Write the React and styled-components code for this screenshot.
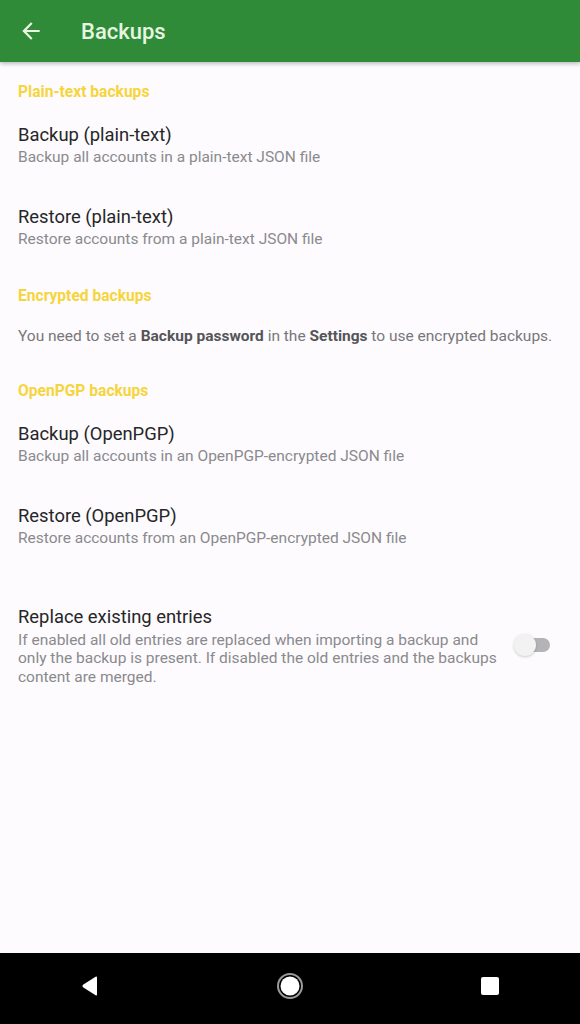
import React from "react";
import styled, { createGlobalStyle } from "styled-components";

const GlobalStyle = createGlobalStyle`
  html, body {
    margin: 0;
    padding: 0;
    background: #fdfbfd;
  }
  body {
    font-family: Roboto, "Noto Sans", sans-serif;
  }
`;

const Screen = styled.div`
  width: 580px;
  height: 1024px;
  display: flex;
  flex-direction: column;
  background: #fdfbfd;
  overflow: hidden;
`;

const AppBar = styled.header`
  height: 62px;
  flex: 0 0 62px;
  background: #2f8b38;
  display: flex;
  align-items: center;
  padding-left: 18px;
  box-shadow: 0 2px 4px rgba(0, 0, 0, 0.25);
  position: relative;
  z-index: 1;
`;

const BackButton = styled.button`
  border: 0;
  background: none;
  padding: 0;
  width: 26px;
  height: 26px;
  display: flex;
  color: #eaf6e4;
`;

const Title = styled.h1`
  margin: 0 0 0 37px;
  font-size: 22px;
  font-weight: 500;
  color: #e8f5e2;
`;

const Content = styled.main`
  flex: 1;
  display: flex;
  flex-direction: column;
`;

const Category = styled.div`
  padding: 20px 18px 0;
  line-height: 20px;
  font-size: 15.6px;
  font-weight: 700;
  color: #f6d53c;
`;

const Info = styled.p`
  margin: 0;
  padding: 20px 18px 15px;
  font-size: 15.5px;
  line-height: 20px;
  color: #77777b;
  b {
    color: #555559;
    font-weight: 700;
  }
`;

const Item = styled.div`
  padding: 21px 18px 17px;
  display: flex;
  align-items: center;
  gap: 12px;
  margin-top: ${({ $gap }) => $gap || 0}px;
`;

const ItemText = styled.div`
  flex: 1;
  min-width: 0;
`;

const ItemTitle = styled.div`
  font-size: 18.4px;
  line-height: 24px;
  color: #262628;
`;

const ItemSummary = styled.div`
  margin-top: ${({ $mt }) => $mt || 0}px;
  font-size: 15.5px;
  line-height: ${({ $lh }) => $lh || 20}px;
  color: #8a8a8e;
  max-width: ${({ $max }) => ($max ? $max + "px" : "none")};
`;

const Switch = styled.div`
  position: relative;
  width: 36px;
  height: 22px;
  flex: 0 0 36px;
  margin-right: 12px;
`;

const Track = styled.div`
  position: absolute;
  left: 6px;
  right: 0;
  top: 4px;
  height: 14px;
  border-radius: 7px;
  background: #b4b4b6;
`;

const Thumb = styled.div`
  position: absolute;
  left: 0;
  top: 0;
  width: 22px;
  height: 22px;
  border-radius: 50%;
  background: #f2f2f2;
  box-shadow: 0 1px 3px rgba(0, 0, 0, 0.2);
`;

const NavBar = styled.nav`
  flex: 0 0 71px;
  height: 71px;
  background: #000;
  display: flex;
  align-items: center;
  justify-content: space-between;
  padding: 0 70px 6px;
  box-sizing: border-box;
`;

const NavIcon = styled.div`
  display: flex;
  align-items: center;
  justify-content: center;
  width: 40px;
  height: 40px;
`;

const plain = [
  { title: "Backup (plain-text)", summary: "Backup all accounts in a plain-text JSON file" },
  { title: "Restore (plain-text)", summary: "Restore accounts from a plain-text JSON file" },
];

const pgp = [
  { title: "Backup (OpenPGP)", summary: "Backup all accounts in an OpenPGP-encrypted JSON file" },
  { title: "Restore (OpenPGP)", summary: "Restore accounts from an OpenPGP-encrypted JSON file" },
];

function Pref({ title, summary }) {
  return (
    <Item>
      <ItemText>
        <ItemTitle>{title}</ItemTitle>
        <ItemSummary>{summary}</ItemSummary>
      </ItemText>
    </Item>
  );
}

export default function App() {
  return (
    <Screen>
      <GlobalStyle />
      <AppBar>
        <BackButton aria-label="Back">
          <svg width="26" height="26" viewBox="0 0 24 24" fill="currentColor">
            <path d="M20 11H7.83l5.59-5.59L12 4l-8 8 8 8 1.41-1.41L7.83 13H20v-2z" />
          </svg>
        </BackButton>
        <Title>Backups</Title>
      </AppBar>
      <Content>
        <Category>Plain-text backups</Category>
        {plain.map((p) => (
          <Pref key={p.title} {...p} />
        ))}
        <Category>Encrypted backups</Category>
        <Info>
          You need to set a <b>Backup password</b> in the <b>Settings</b> to use encrypted backups.
        </Info>
        <Category>OpenPGP backups</Category>
        {pgp.map((p) => (
          <Pref key={p.title} {...p} />
        ))}
        <Item $gap={19}>
          <ItemText>
            <ItemTitle>Replace existing entries</ItemTitle>
            <ItemSummary $mt={2} $lh={18.3} $max={490}>
              If enabled all old entries are replaced when importing a backup and only the backup is
              present. If disabled the old entries and the backups content are merged.
            </ItemSummary>
          </ItemText>
          <Switch>
            <Track />
            <Thumb />
          </Switch>
        </Item>
      </Content>
      <NavBar>
        <NavIcon>
          <svg width="20" height="22" viewBox="0 0 20 22">
            <path d="M17 2.5 L17 19.5 Q17 21 15.6 20.2 L3 12.2 Q1.8 11 3 9.8 L15.6 1.8 Q17 1 17 2.5 Z" fill="#fff" />
          </svg>
        </NavIcon>
        <NavIcon>
          <svg width="28" height="28" viewBox="0 0 28 28">
            <circle cx="14" cy="14" r="12" fill="none" stroke="#9a9a9a" strokeWidth="2" />
            <circle cx="14" cy="14" r="9.5" fill="#fff" />
          </svg>
        </NavIcon>
        <NavIcon>
          <svg width="20" height="20" viewBox="0 0 20 20">
            <rect x="1" y="1" width="18" height="18" rx="2" fill="#fff" />
          </svg>
        </NavIcon>
      </NavBar>
    </Screen>
  );
}
